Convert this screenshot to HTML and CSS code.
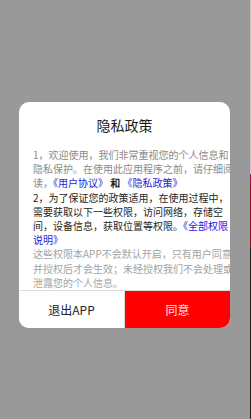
FILE: index.html
```html
<!DOCTYPE html>
<html lang="zh">

<head>
  <meta charset="UTF-8">
  <meta name="viewport" content="width=device-width, initial-scale=1.0">
  <title>隐私政策</title>
  <link rel="stylesheet" href="styles.css">
</head>

<body>
  <div class="dialog">
    <h2 class="title">隐私政策</h2>
    <div class="content">
      <p class="muted">1，欢迎使用，我们非常重视您的个人信息和隐私保护。在使用此应用程序之前，请仔细阅读，<a class="link">《用户协议》</a><span class="dark and"> 和 </span><a class="link">《隐私政策》</a></p>
      <p class="dark">2，为了保证您的政策适用，在使用过程中，需要获取以下一些权限，访问网络，存储空间，设备信息，获取位置等权限。<a class="link">《全部权限说明》</a></p>
      <p class="light">这些权限本APP不会默认开启，只有用户同意并授权后才会生效；未经授权我们不会处理或泄露您的个人信息。</p>
    </div>
    <footer class="actions">
      <button class="btn-exit">退出APP</button>
      <button class="btn-agree">同意</button>
    </footer>
  </div>
</body>

</html>
```

FILE: styles.css
```css
* {
  margin: 0;
  padding: 0;
  box-sizing: border-box;
}

body {
  width: 251px;
  height: 419px;
  background: #999999;
  font-family: "Noto Sans CJK SC", "Noto Sans", sans-serif;
  overflow: hidden;
}

/* strip on the window edge */
body::after {
  content: "";
  position: fixed;
  top: 0;
  right: 0;
  width: 1px;
  height: 100%;
  background: linear-gradient(#c6c6c6 0, #c6c6c6 174px, #a0159a 174px, #a0159a 178px, #8a1b1b 178px, #8a1b1b 247px, #1d1d1d 247px);
}

.dialog {
  width: 211px;
  margin: 102px 0 0 19px;
  background: #fff;
  border-radius: 10px;
  overflow: hidden;
}

.title {
  height: 46px;
  line-height: 46px;
  text-align: center;
  font-size: 14px;
  font-weight: normal;
  color: #1a1a1a;
}

.content {
  height: 142px;
  padding-left: 14px;
  overflow: hidden;
}

.content p {
  width: 200px;
  font-size: 10px;
  line-height: 14.2px;
}

.muted {
  color: #8a8a8a;
}

.dark {
  color: #262626;
}

.and {
  font-weight: bold;
}

.light {
  color: #a3a3a3;
}

.link {
  color: #1c1cdc;
}

.actions {
  display: flex;
  height: 38px;
  border-top: 1px solid #dcdcdc;
}

.actions button {
  flex: 1;
  border: none;
  font-family: inherit;
  font-size: 12px;
}

.btn-exit {
  background: #fff;
  color: #222;
  border-right: 1px solid #dcdcdc !important;
}

.btn-agree {
  background: #ff0000;
  color: #fde8e8;
}
```
